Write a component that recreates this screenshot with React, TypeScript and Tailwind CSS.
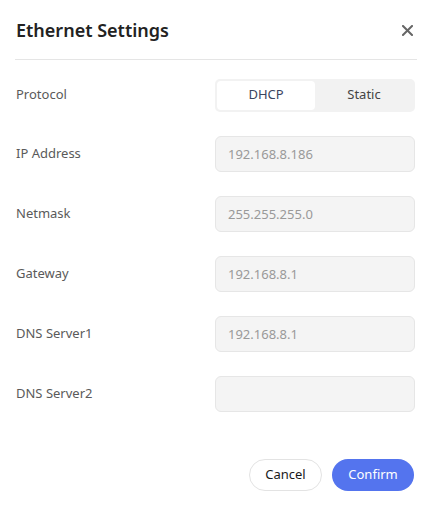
import React, { useState } from "react";

const fields = [
  { label: "IP Address", value: "192.168.8.186" },
  { label: "Netmask", value: "255.255.255.0" },
  { label: "Gateway", value: "192.168.8.1" },
  { label: "DNS Server1", value: "192.168.8.1" },
  { label: "DNS Server2", value: "" },
];

const App: React.FC = () => {
  const [protocol, setProtocol] = useState("DHCP");

  return (
    <div
      className="w-[432px] h-[509px] bg-white text-[#333]"
      style={{ fontFamily: '"Noto Sans", "Open Sans", sans-serif' }}
    >
      <div className="flex items-center justify-between pl-[16px] pr-[19px] pt-[16px] pb-[15px]">
        <h2 className="text-[18px] leading-[28px] font-semibold text-[#222]">Ethernet Settings</h2>
        <button className="w-[12px] h-[12px] flex items-center justify-center text-[#666]">
          <svg width="11" height="11" viewBox="0 0 11 11">
            <path d="M1 1 L10 10 M10 1 L1 10" stroke="currentColor" strokeWidth="2" strokeLinecap="square" />
          </svg>
        </button>
      </div>
      <div className="mx-[15px] h-px bg-[#e5e5e5]" />

      <div className="px-[16px] pt-[18px]">
        <div className="flex items-center justify-between h-[34px]">
          <span className="text-[13px] text-[#5a5a5a]">Protocol</span>
          <div className="w-[200px] h-[33px] mr-[1px] rounded-[5px] bg-[#f2f2f2] p-[2px] flex">
            {["DHCP", "Static"].map((p) => (
              <button
                key={p}
                onClick={() => setProtocol(p)}
                className={
                  "flex-1 rounded-[4px] text-[13px] " +
                  (protocol === p ? "bg-white text-[#3a4560]" : "text-[#444]")
                }
              >
                {p}
              </button>
            ))}
          </div>
        </div>

        {fields.map((f) => (
          <div key={f.label} className="flex items-center justify-between h-[36px] mt-[24px]">
            <span className="text-[13px] text-[#5a5a5a]">{f.label}</span>
            <input
              readOnly
              value={f.value}
              className="w-[200px] h-[36px] mr-[1px] rounded-[6px] bg-[#f4f4f4] border border-[#e6e6e6] px-[12px] text-[13px] text-[#999] outline-none"
            />
          </div>
        ))}
      </div>

      <div className="flex justify-end gap-[10px] pr-[18px] mt-[47px]">
        <button className="w-[73px] h-[32px] rounded-full border border-[#e3e3e3] bg-white text-[13px] text-[#1a1a1a]">
          Cancel
        </button>
        <button className="w-[82px] h-[32px] rounded-full bg-[#5474ee] text-[13px] text-white">
          Confirm
        </button>
      </div>
    </div>
  );
};

export default App;
